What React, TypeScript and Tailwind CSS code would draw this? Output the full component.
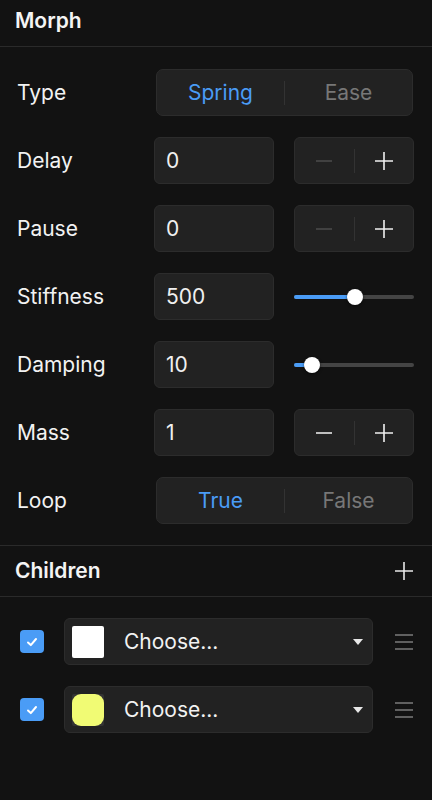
import React, { useState } from 'react';

const font = { fontFamily: 'Inter, "Noto Sans", sans-serif' };

const Segmented: React.FC<{ options: string[]; value: string; onChange: (v: string) => void }> = ({ options, value, onChange }) => (
  <div className="ml-[2px] mr-[1px] flex h-[47px] flex-1 items-center rounded-[7px] border border-[#2c2c2c] bg-[#222222]">
    {options.map((o, i) => (
      <React.Fragment key={o}>
        {i > 0 && <div className="h-6 w-px bg-[#333333]" />}
        <button
          onClick={() => onChange(o)}
          className={`flex h-full flex-1 items-center justify-center text-[21px] ${value === o ? 'text-[#4a9cf6]' : 'text-[#777777]'}`}
        >
          {o}
        </button>
      </React.Fragment>
    ))}
  </div>
);

const NumInput: React.FC<{ value: string }> = ({ value }) => (
  <div className="flex h-[47px] w-[120px] items-center rounded-[6px] border border-[#2c2c2c] bg-[#222222] pl-[11px] text-[21px] text-[#f0f0f0]">
    {value}
  </div>
);

const Stepper: React.FC<{ minusOn?: boolean }> = ({ minusOn }) => (
  <div className="flex h-[47px] w-[120px] items-center rounded-[6px] border border-[#2c2c2c] bg-[#222222]">
    <div className="flex flex-1 items-center justify-center">
      <svg width="20" height="20" viewBox="0 0 20 20">
        <path d="M2 10h16" stroke={minusOn ? '#e8e8e8' : '#4a4a4a'} strokeWidth="1.6" />
      </svg>
    </div>
    <div className="h-6 w-px bg-[#333333]" />
    <div className="flex flex-1 items-center justify-center">
      <svg width="20" height="20" viewBox="0 0 20 20">
        <path d="M1 10h18M10 1v18" stroke="#f0f0f0" strokeWidth="1.6" />
      </svg>
    </div>
  </div>
);

const Slider: React.FC<{ pct: number }> = ({ pct }) => (
  <div className="relative flex h-[47px] w-[120px] items-center">
    <div className="relative h-[4px] w-full rounded-full bg-[#444444]">
      <div className="h-full rounded-full bg-[#4a9cf6]" style={{ width: `${pct}%` }} />
      <div
        className="absolute top-1/2 h-4 w-4 -translate-x-1/2 -translate-y-1/2 rounded-full bg-white shadow-[0_1px_3px_rgba(0,0,0,0.6)]"
        style={{ left: `${pct}%` }}
      />
    </div>
  </div>
);

const Row: React.FC<{ label: string; children: React.ReactNode }> = ({ label, children }) => (
  <div className="flex h-[47px] items-center">
    <div className="w-[138px] pl-[1px] text-[21px] text-[#f2f2f2]">{label}</div>
    {children}
  </div>
);

const Child: React.FC<{ swatch: React.ReactNode }> = ({ swatch }) => (
  <div className="flex h-[47px] items-center">
    <div className="ml-[4px] flex h-[23px] w-[24px] items-center justify-center rounded-[4px] bg-[#4a9cf6]">
      <svg width="14" height="14" viewBox="0 0 14 14">
        <path d="M3 7.5l2.8 2.6L11 4" fill="none" stroke="white" strokeWidth="2" strokeLinecap="round" strokeLinejoin="round" />
      </svg>
    </div>
    <div className="ml-[20px] flex h-[47px] w-[309px] items-center rounded-[6px] border border-[#2c2c2c] bg-[#222222] pl-[7px] pr-[9px]">
      {swatch}
      <span className="ml-[20px] flex-1 text-[21px] text-[#f2f2f2]">Choose...</span>
      <svg width="10" height="6" viewBox="0 0 10 6">
        <path d="M0 0h10L5 6z" fill="#e8e8e8" />
      </svg>
    </div>
    <div className="ml-auto flex w-[18px] flex-col gap-[5px]">
      <div className="h-[2px] bg-[#606060]" />
      <div className="h-[2px] bg-[#606060]" />
      <div className="h-[2px] bg-[#606060]" />
    </div>
  </div>
);

export default function App() {
  const [type, setType] = useState('Spring');
  const [loop, setLoop] = useState('True');

  return (
    <div className="min-h-[800px] w-[432px] bg-[#121212]" style={font}>
      <div className="h-[47px] border-b border-[#2a2a2a] pl-[15px] pt-[5px] text-[21px] font-semibold text-[#f4f4f4]">
        Morph
      </div>
      <div className="flex flex-col gap-[21px] pb-[21px] pl-4 pr-[18px] pt-[22px]">
        <Row label="Type">
          <Segmented options={['Spring', 'Ease']} value={type} onChange={setType} />
        </Row>
        <Row label="Delay">
          <NumInput value="0" />
          <div className="ml-auto"><Stepper /></div>
        </Row>
        <Row label="Pause">
          <NumInput value="0" />
          <div className="ml-auto"><Stepper /></div>
        </Row>
        <Row label="Stiffness">
          <NumInput value="500" />
          <div className="ml-auto"><Slider pct={51} /></div>
        </Row>
        <Row label="Damping">
          <NumInput value="10" />
          <div className="ml-auto"><Slider pct={15} /></div>
        </Row>
        <Row label="Mass">
          <NumInput value="1" />
          <div className="ml-auto"><Stepper minusOn /></div>
        </Row>
        <Row label="Loop">
          <Segmented options={['True', 'False']} value={loop} onChange={setLoop} />
        </Row>
      </div>
      <div className="flex h-[52px] items-center border-y border-[#2a2a2a] pl-[15px] pr-[18px]">
        <span className="text-[21px] font-semibold text-[#f4f4f4]">Children</span>
        <svg className="ml-auto" width="20" height="20" viewBox="0 0 20 20">
          <path d="M1 10h18M10 1v18" stroke="#e8e8e8" strokeWidth="1.6" />
        </svg>
      </div>
      <div className="flex flex-col gap-[21px] pl-4 pr-[19px] pt-[21px]">
        <Child swatch={<div className="h-8 w-8 rounded-[2px] bg-white" />} />
        <Child
          swatch={
            <div className="h-8 w-8 rounded-[2px] bg-[#333333]">
              <div className="h-8 w-8 rounded-[9px] bg-[#f1fb74]" />
            </div>
          }
        />
      </div>
    </div>
  );
}
